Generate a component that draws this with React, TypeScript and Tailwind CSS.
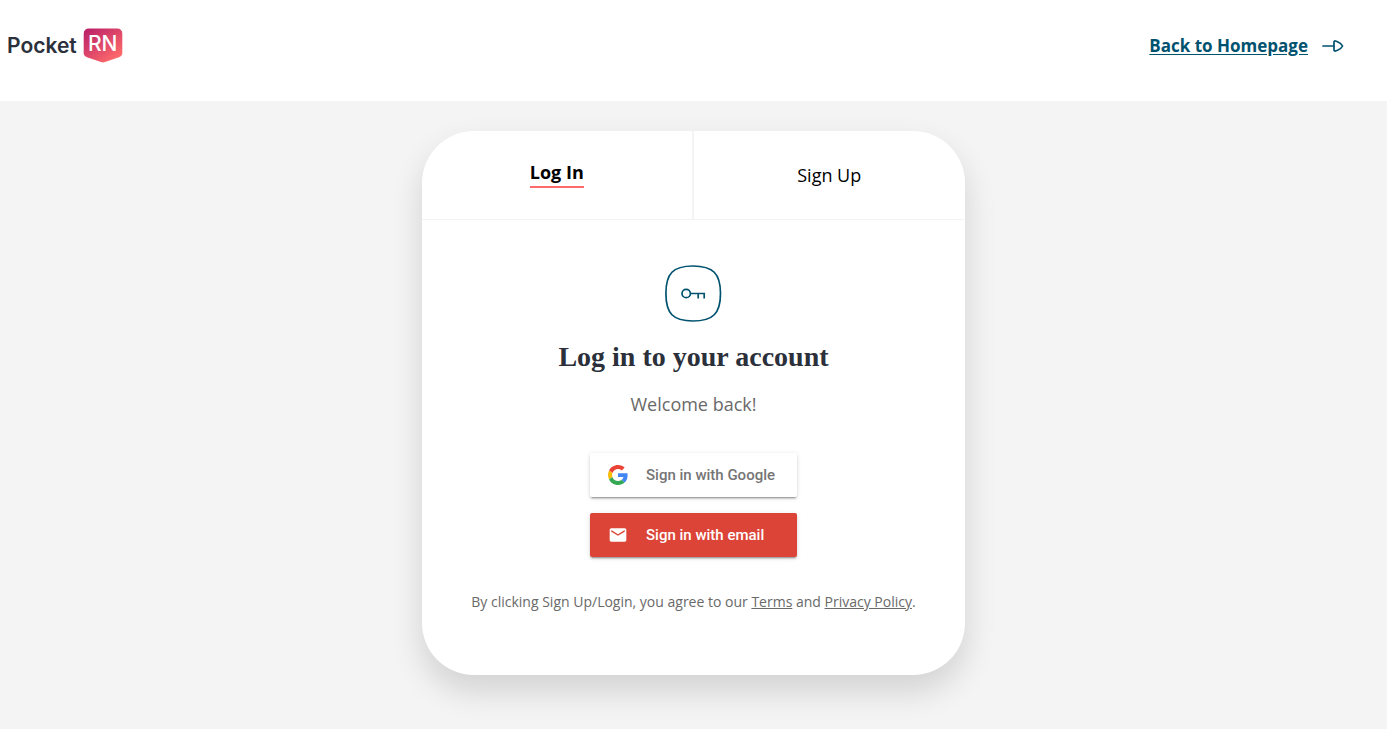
import { useState } from "react";

function Logo() {
  return (
    <a href="#" aria-label="Pocket RN" className="flex items-center gap-[6px] font-['Inter',sans-serif] text-[#2b303a]">
      <span className="text-[21px] leading-8 font-semibold">Pocket</span>
      <span className="relative flex h-[35px] w-10 justify-center">
        <svg className="absolute inset-0" width="40" height="35" viewBox="0 0 40 35" fill="none" aria-hidden="true">
          <path d="M6 0.5H34Q39.3 0.5 39.3 6V25Q39.3 28 36 29.2L22 34Q20 34.8 18 34L4 29.2Q0.7 28 0.7 25V6Q0.7 0.5 6 0.5Z" fill="url(#badge)" />
          <defs>
            <linearGradient id="badge" x1="7" y1="1" x2="31" y2="33" gradientUnits="userSpaceOnUse">
              <stop stopColor="#bd2468" />
              <stop offset="1" stopColor="#ff6b6b" />
            </linearGradient>
          </defs>
        </svg>
        <span className="relative text-[21px] leading-8 font-medium text-white">RN</span>
      </span>
    </a>
  );
}

function ArrowIcon() {
  return (
    <svg width="22" height="14" viewBox="0 0 22 14" fill="none" stroke="#00526f" strokeWidth="1.7" strokeLinecap="round" strokeLinejoin="round" aria-hidden="true">
      <path d="M1 7H12" />
      <path d="M12 3.2Q12 1.6 13.5 2L15.5 2.7Q19.3 4.3 20.6 7Q19.3 9.7 15.5 11.3L13.5 12Q12 12.4 12 10.8Z" />
    </svg>
  );
}

function KeyIcon() {
  return (
    <svg width="57" height="57" viewBox="0 0 57 57" fill="none" stroke="#00526f" strokeWidth="1.7" aria-hidden="true">
      <path d="M28 1C48 1 55.5 8.5 55.5 28.5S48 56 28 56S0.9 48.5 0.9 28.5S8 1 28 1Z" />
      <circle cx="21.2" cy="28.5" r="4.2" />
      <path d="M25.4 28.5H39.2V33.5M33.2 28.5V33.5" />
    </svg>
  );
}

function GoogleIcon() {
  return (
    <svg width="20" height="20" viewBox="0 0 48 48" aria-hidden="true">
      <path fill="#EA4335" d="M24 9.5c3.54 0 6.71 1.22 9.21 3.6l6.85-6.85C35.9 2.38 30.47 0 24 0 14.62 0 6.51 5.38 2.56 13.22l7.98 6.19C12.43 13.72 17.74 9.5 24 9.5z" />
      <path fill="#4285F4" d="M46.98 24.55c0-1.57-.15-3.09-.38-4.55H24v9.02h12.94c-.58 2.96-2.26 5.48-4.78 7.18l7.73 6c4.51-4.18 7.09-10.36 7.09-17.65z" />
      <path fill="#FBBC05" d="M10.53 28.59c-.48-1.45-.76-2.99-.76-4.59s.27-3.14.76-4.59l-7.98-6.19C.92 16.46 0 20.12 0 24c0 3.88.92 7.54 2.56 10.78l7.97-6.19z" />
      <path fill="#34A853" d="M24 48c6.48 0 11.93-2.13 15.89-5.81l-7.73-6c-2.15 1.45-4.92 2.3-8.16 2.3-6.26 0-11.57-4.22-13.47-9.91l-7.98 6.19C6.51 42.62 14.62 48 24 48z" />
    </svg>
  );
}

function MailIcon() {
  return (
    <svg width="20" height="20" viewBox="0 0 24 24" fill="white" aria-hidden="true">
      <path d="M20 4H4c-1.1 0-1.99.9-1.99 2L2 18c0 1.1.9 2 2 2h16c1.1 0 2-.9 2-2V6c0-1.1-.9-2-2-2zm0 4l-8 5-8-5V6l8 5 8-5v2z" />
    </svg>
  );
}

const buttonClass =
  "flex h-11 w-full cursor-pointer items-center gap-[18px] rounded-[2px] px-[18px] font-['Roboto',sans-serif] text-[15px] font-medium shadow-[0_2px_2px_0_rgba(0,0,0,0.14),0_3px_1px_-2px_rgba(0,0,0,0.2),0_1px_5px_0_rgba(0,0,0,0.12)]";

export default function App() {
  const [tab, setTab] = useState<"login" | "signup">("login");

  const tabLabel = (active: boolean) => (active ? "border-b-2 border-[#ff6b6b] pb-1 font-bold" : "");

  return (
    <div className="flex min-h-screen flex-col bg-[#f4f4f4] font-['Open_Sans',sans-serif]">
      <header className="flex items-center justify-between bg-white pt-7 pr-[43px] pb-[38px] pl-[7px]">
        <Logo />
        <a href="#" className="flex items-center gap-[14px] text-[17px] leading-8 font-bold text-[#00526f]">
          <span className="underline underline-offset-2">Back to Homepage</span>
          <ArrowIcon />
        </a>
      </header>

      <main className="flex justify-center px-4 pt-[30px] pb-[54px]">
        <section className="w-full max-w-[543px] overflow-hidden rounded-[52px] bg-white shadow-[0_16px_32px_rgba(0,0,0,0.14)]">
          <div className="grid h-[89px] grid-cols-2 divide-x-2 divide-[#f4f4f4] border-b border-[#f4f4f4] text-lg text-black">
            <button type="button" className="flex cursor-pointer items-center justify-center leading-5" onClick={() => setTab("login")}>
              <span className={tabLabel(tab === "login")}>Log In</span>
            </button>
            <button type="button" className="flex cursor-pointer items-center justify-center leading-5" onClick={() => setTab("signup")}>
              <span className={tabLabel(tab === "signup")}>Sign Up</span>
            </button>
          </div>

          <div className="flex flex-col items-center px-6 pt-[45px] pb-[61px] text-center">
            <KeyIcon />
            <h1 className="mt-[19px] font-['Liberation_Serif',serif] text-[28px] leading-8 font-bold text-[#2b303a]">Log in to your account</h1>
            <p className="mt-[17px] text-lg leading-7 text-[#696969]">Welcome back!</p>

            <div className="mt-[35px] flex w-[207px] flex-col gap-4">
              <button type="button" className={`${buttonClass} bg-white text-[#757575]`}>
                <GoogleIcon />
                Sign in with Google
              </button>
              <button type="button" className={`${buttonClass} bg-[#db4437] text-white`}>
                <MailIcon />
                Sign in with email
              </button>
            </div>

            <p className="mt-[33px] text-sm leading-6 text-[#696969]">
              By clicking Sign Up/Login, you agree to our{" "}
              <a href="#" className="underline">Terms</a> and{" "}
              <a href="#" className="underline">Privacy Policy</a>.
            </p>
          </div>
        </section>
      </main>
    </div>
  );
}
